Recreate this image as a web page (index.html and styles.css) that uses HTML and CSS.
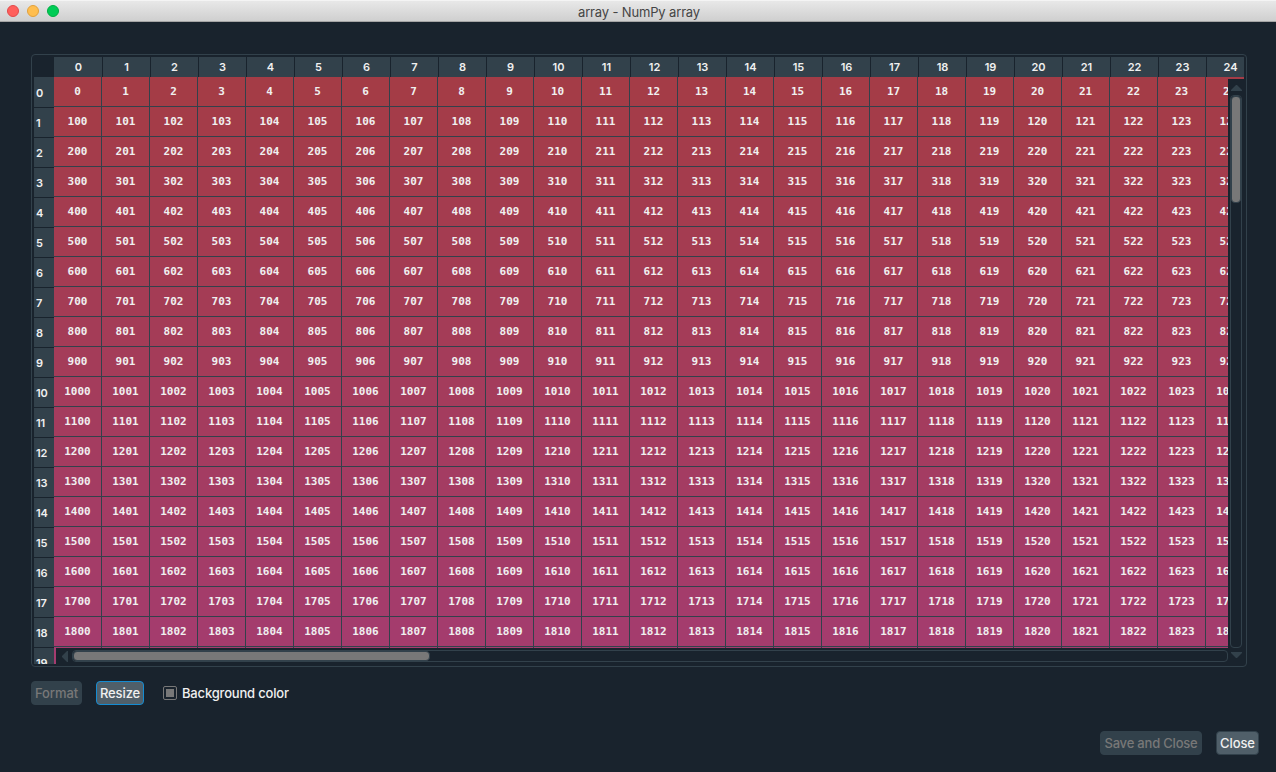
FILE: index.html
```html
<!DOCTYPE html>
<html lang="en">
<head>
<meta charset="utf-8">
<title>array - NumPy array</title>
<link rel="stylesheet" href="styles.css">
</head>
<body>
<header class="titlebar">
  <div class="lights"><i class="light red"></i><i class="light amber"></i><i class="light green"></i></div>
  <span class="title">array - NumPy array</span>
</header>
<main class="dialog">
  <section class="frame">
    <div class="view">
      <div class="corner"></div>
      <div class="col-heads" id="cols"></div>
      <div class="row-heads" id="rows"></div>
      <div class="cells" id="cells"></div>
      <div class="scrollbars">
        <svg class="arrow up" width="11" height="6" viewBox="0 0 11 6"><path d="M0 6V5L5 0h1l5 5v1z"/></svg>
        <div class="groove vertical"><div class="handle"></div></div>
        <svg class="arrow left" width="6" height="11" viewBox="0 0 6 11"><path d="M6 0H5L0 5v1l5 5h1z"/></svg>
        <div class="groove horizontal"><div class="handle"></div></div>
        <svg class="arrow down" width="11" height="6" viewBox="0 0 11 6"><path d="M0 0v1l5 5h1l5-5V0z"/></svg>
      </div>
    </div>
  </section>
  <div class="tools">
    <button class="btn format" disabled><span>Format</span></button>
    <button class="btn resize"><span>Resize</span></button>
    <label class="check"><i class="box"></i><span>Background color</span></label>
  </div>
  <footer class="actions">
    <button class="btn save" disabled><span>Save and Close</span></button>
    <button class="btn close"><span>Close</span></button>
  </footer>
</main>
<script src="table.js"></script>
</body>
</html>
```

FILE: table.js
```js
const COLS = 25, ROWS = 20, MAX = 9999;

// Hue runs from red at 0 toward blue at MAX, blended over the window colour.
function cellColor(value) {
  const hue = 0.99 - 0.33 * value / MAX;
  const blue = 0.6 * (76.5 + 178.5 * 6 * (1 - hue)) + 18;
  return `rgb(164, 60, ${Math.round(blue)})`;
}

function add(parent, className, text) {
  const el = document.createElement('div');
  el.className = className;
  el.textContent = text;
  parent.appendChild(el);
  return el;
}

const cols = document.getElementById('cols');
const rows = document.getElementById('rows');
const cells = document.getElementById('cells');
for (let c = 0; c < COLS; c++) add(cols, 'col-head', c);
for (let r = 0; r < ROWS; r++) {
  add(rows, 'row-head', r);
  for (let c = 0; c < COLS; c++) {
    const value = r * 100 + c;
    // The last row lies under the scroll bar, so only its fill is drawn.
    add(cells, 'cell', r < ROWS - 1 ? value : '').style.backgroundColor = cellColor(value);
  }
}
```

FILE: styles.css
```css
* { box-sizing: border-box; }
body {
  margin: 0;
  width: 1276px;
  height: 772px;
  overflow: hidden;
  background: #19232d;
  color: #f0f0f0;
  font: 500 13px/16px Inter, "Liberation Sans", sans-serif;
}
.titlebar {
  height: 22px;
  display: grid;
  grid-template-columns: 1fr auto 1fr;
  align-items: center;
  background: linear-gradient(#e8e8e8, #cfcfcf);
  border-top: 1px solid #f4f4f4;
  border-bottom: 1px solid #a5a5a5;
}
.lights { display: flex; gap: 8px; padding-left: 7px; }
.light { width: 12px; height: 12px; border-radius: 50%; border: 1px solid; }
.red { background: #ff5f5b; border-color: #e2494a; }
.amber { background: #ffbe4f; border-color: #e2a13c; }
.green { background: #00cc56; border-color: #00ad43; }
.title { color: #454545; font-weight: 400; letter-spacing: -0.15px; padding: 1px 0 0 2px; white-space: nowrap; }

.dialog { padding: 32px 17px 0 31px; }
.frame {
  width: 1216px;
  height: 613px;
  padding: 2px;
  border: 1px solid #32414b;
  border-radius: 4px;
}
.view {
  position: relative;
  display: grid;
  grid-template: 20px 587px / 20px 1190px;
  overflow: hidden;
}
.col-heads { display: flex; overflow: hidden; background: #32414b; }
.col-head {
  flex: 0 0 48px;
  font-size: 11px;
  font-weight: 600;
  line-height: 21px;
  text-align: center;
  border-left: 1px solid #19232d;
}
.col-head:first-child { border-left-color: #32414b; }
.row-heads { overflow: hidden; background: #32414b; }
.row-head {
  height: 30px;
  padding-left: 2px;
  font-size: 11px;
  font-weight: 600;
  letter-spacing: -0.2px;
  line-height: 31px;
  border-top: 1px solid #19232d;
}
.row-head:first-child { border-top-color: #32414b; }
.cells {
  display: grid;
  grid-template-columns: repeat(25, 48px);
  grid-auto-rows: 30px;
  overflow: hidden;
}
.cell {
  border-right: 1px solid #32414b;
  border-bottom: 1px solid #32414b;
  font: bold 11px/30px "DejaVu Sans Mono", monospace;
  text-align: center;
}

/* Scroll bars cover the right and bottom edges of the cells. */
.scrollbars {
  position: absolute;
  inset: 22px 0 0 22px;
  display: grid;
  grid-template: 7px 9px 553px 2px 12px 2px / 6px 10px 1156px 2px 12px 2px;
  pointer-events: none;
}
.scrollbars::before { content: ""; grid-area: 1 / 4 / -1 / -1; background: #19232d; }
.scrollbars::after { content: ""; grid-area: 4 / 1 / -1 / 5; background: #19232d; }
.arrow { fill: #32414b; z-index: 1; }
.up { grid-area: 1 / 5 / 3 / 6; align-self: start; justify-self: center; margin-top: 6px; }
.left { grid-area: 5 / 1 / 6 / 3; align-self: center; justify-self: start; margin-left: 6px; }
.down { grid-area: 4 / 5 / 6 / 6; align-self: start; justify-self: center; margin-top: 4px; }
.groove { border: 1px solid #32414b; border-radius: 4px; z-index: 1; }
.vertical { grid-area: 3 / 5 / 4 / 6; }
.horizontal { grid-area: 5 / 3 / 6 / 4; }
.handle { background: #787878; border: 1px solid #32414b; border-radius: 4px; }
.vertical .handle { height: 107px; }
.horizontal .handle { width: 357px; height: 10px; }

.tools { display: flex; align-items: center; margin-top: 14px; height: 24px; }
.btn {
  height: 24px;
  padding: 0;
  border: 1px solid #32414b;
  border-radius: 4px;
  background: #505f69;
  color: #f0f0f0;
  font: inherit;
  white-space: nowrap;
  letter-spacing: -0.1px;
}
.btn:disabled { background: #32414b; color: #787878; }
.format { width: 51px; }
.resize { width: 48px; margin-left: 14px; border-color: #148cd2; }
.check { display: flex; align-items: center; margin-left: 19px; gap: 5px; letter-spacing: -0.18px; }
.box { width: 14px; height: 14px; padding: 2px; border: 1px solid #787878; border-radius: 2px; }
.box::before { content: ""; display: block; width: 8px; height: 8px; background: #787878; }
.actions { display: flex; justify-content: flex-end; gap: 14px; margin-top: 26px; }
.save { width: 102px; letter-spacing: -0.2px; }
.close { width: 43px; }
```
